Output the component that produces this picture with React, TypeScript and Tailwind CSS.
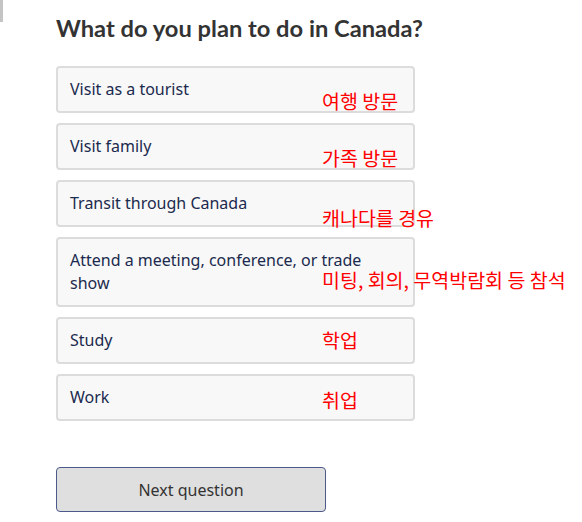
import React from "react";

const OPTIONS = [
  { label: "Visit as a tourist", ko: "여행 방문", koTop: "top-[23px]" },
  { label: "Visit family", ko: "가족 방문", koTop: "top-[23px]" },
  { label: "Transit through Canada", ko: "캐나다를 경유", koTop: "top-[26px]" },
  {
    label: "Attend a meeting, conference, or trade show",
    ko: "미팅, 회의, 무역박람회 등 참석",
    koTop: "top-[31px]",
  },
  { label: "Study", ko: "학업", koTop: "top-[11px]" },
  { label: "Work", ko: "취업", koTop: "top-[14px]" },
];

export default function App() {
  return (
    <div className="relative w-[582px] h-[522px] bg-white overflow-hidden font-['Noto_Sans',sans-serif]">
      {/* left edge scrollbar remnant */}
      <div className="absolute left-0 top-0 w-[3px] h-[22px] bg-[#c4c4c4]" />

      <div className="pl-[56px] pt-[12px]">
        <h1 className="font-['Lato',sans-serif] font-bold text-[23.7px] leading-[32px] text-[#333333]">
          What do you plan to do in Canada?
        </h1>

        <div className="mt-[22px] flex flex-col gap-[10px] w-[359px]">
          {OPTIONS.map((opt) => (
            <div key={opt.label} className="relative">
              <button className="w-full text-left border-2 border-[#dcdcdc] bg-[#f8f8f8] rounded-[4px] px-3 py-[10px] text-[16px] leading-[23px] text-[#1b2a4e]">
                {opt.label}
              </button>
              <span
                className={`absolute left-[266px] ${opt.koTop} whitespace-nowrap text-[19.5px] leading-[24px] text-[#ff0000] font-['Noto_Sans_CJK_KR',sans-serif]`}
              >
                {opt.ko}
              </span>
            </div>
          ))}
        </div>

        <button className="mt-[46px] w-[270px] h-[45px] rounded-[4px] border border-[#4b5a8a] bg-[#dfdfdf] text-[16px] text-[#333333]">
          Next question
        </button>
      </div>
    </div>
  );
}
